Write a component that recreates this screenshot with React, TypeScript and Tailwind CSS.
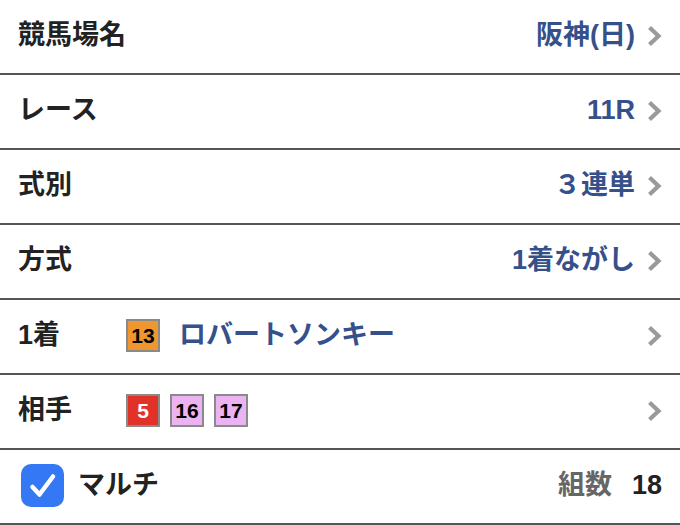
import React from 'react'

const font = { fontFamily: '"Liberation Sans", "Noto Sans CJK JP", sans-serif' }

function Chevron() {
  return (
    <svg width="16" height="22" viewBox="0 0 16 22" className="ml-[11px] shrink-0" aria-hidden="true">
      <path d="M3.5 2.5 L12.5 11 L3.5 19.5" fill="none" stroke="#9a9a9a" strokeWidth="4.2" strokeLinecap="butt" strokeLinejoin="miter" />
    </svg>
  )
}

function Badge({ n, bg, fg = 'text-black' }: { n: number; bg: string; fg?: string }) {
  return (
    <span
      className={`flex h-[33px] w-[34px] items-center justify-center border-2 border-[#8a8a8a] text-[21px] font-bold leading-none ${bg} ${fg}`}
    >
      {n}
    </span>
  )
}

function Row({ children }: { children: React.ReactNode }) {
  return (
    <div className="flex h-[75px] items-center border-b-2 border-[#555] pb-[2px] pl-[18px] pr-[18px]">
      {children}
    </div>
  )
}

function Label({ children, w }: { children: React.ReactNode; w?: string }) {
  return <span className={`text-[27px] font-bold text-[#222] ${w ?? ''}`}>{children}</span>
}

function Value({ children }: { children: React.ReactNode }) {
  return <span className="ml-auto text-[27px] font-bold text-[#35508a]">{children}</span>
}

export default function App() {
  return (
    <div className="h-[525px] w-[680px] overflow-hidden bg-white" style={font}>
      <Row>
        <Label>競馬場名</Label>
        <Value>阪神(日)</Value>
        <Chevron />
      </Row>
      <Row>
        <Label>レース</Label>
        <Value>11R</Value>
        <Chevron />
      </Row>
      <Row>
        <Label>式別</Label>
        <Value>３連単</Value>
        <Chevron />
      </Row>
      <Row>
        <Label>方式</Label>
        <Value>1着ながし</Value>
        <Chevron />
      </Row>
      <Row>
        <Label w="w-[108px]">1着</Label>
        <Badge n={13} bg="bg-[#f0962f]" />
        <span className="ml-[19px] text-[27px] font-bold text-[#35508a]">ロバートソンキー</span>
        <span className="ml-auto" />
        <Chevron />
      </Row>
      <Row>
        <Label w="w-[108px]">相手</Label>
        <div className="flex gap-[10px]">
          <Badge n={5} bg="bg-[#e23127]" fg="text-white" />
          <Badge n={16} bg="bg-[#ebb3f2]" />
          <Badge n={17} bg="bg-[#ebb3f2]" />
        </div>
        <span className="ml-auto" />
        <Chevron />
      </Row>
      <Row>
        <span className="ml-[3px] flex h-[43px] w-[43px] items-center justify-center rounded-[10px] bg-[#3478f6]">
          <svg width="32" height="32" viewBox="0 0 32 32" aria-hidden="true">
            <path d="M5.5 17 L12.5 24.5 L26 6.5" fill="none" stroke="white" strokeWidth="4.5" strokeLinecap="round" strokeLinejoin="round" />
          </svg>
        </span>
        <span className="ml-[14px] text-[27px] font-bold text-[#222]">マルチ</span>
        <span className="ml-auto text-[27px] font-bold text-[#666]">組数</span>
        <span className="ml-[20px] text-[27px] font-bold text-[#222]">18</span>
      </Row>
    </div>
  )
}
